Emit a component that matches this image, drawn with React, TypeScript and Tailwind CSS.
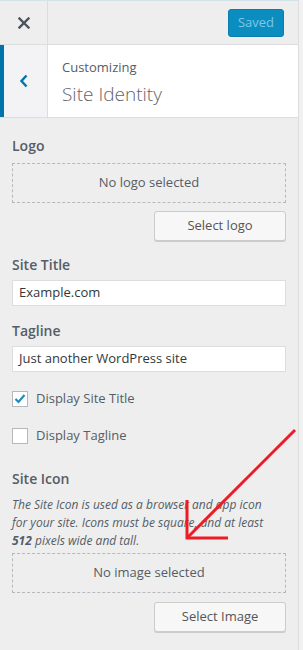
import React from "react";

export default function App() {
  const font = { fontFamily: '"Open Sans", "Noto Sans", Arial, sans-serif' };
  return (
    <div className="relative w-[303px] h-[650px] bg-[#f1f1f1] overflow-hidden" style={font}>
      <div className="w-[299px] h-[650px] bg-[#eeeeee] border-r border-[#dddddd] flex flex-col">
        {/* top bar */}
        <div className="h-[45px] flex border-b border-[#dddddd] border-t border-t-[#d4e2ea]">
          <div className="w-[48px] border-r border-[#dddddd] flex items-center justify-center">
            <svg width="12" height="12" viewBox="0 0 12 12">
              <path d="M1.5 1.5 L10.5 10.5 M10.5 1.5 L1.5 10.5" stroke="#4c545b" strokeWidth="2.4" strokeLinecap="square" />
            </svg>
          </div>
          <div className="flex-1 flex items-center justify-end pr-[14px]">
            <div className="h-[28px] w-[56px] rounded-[3px] bg-[#0c8dc0] border border-[#0a7db0] text-[#7cc9e6] text-[13px] flex items-center justify-center">
              Saved
            </div>
          </div>
        </div>
        {/* header */}
        <div className="h-[73px] flex border-b border-[#dddddd]">
          <div className="w-[48px] flex border-r border-[#dddddd] bg-[#f3f3f5]">
            <div className="w-[4px] bg-[#0073aa]" />
            <div className="flex-1 flex items-center justify-center pr-[4px]">
              <svg width="12" height="16" viewBox="0 0 12 16">
                <path d="M8.5 2.5 L3.5 8 L8.5 13.5" stroke="#0073aa" strokeWidth="2.4" fill="none" />
              </svg>
            </div>
          </div>
          <div className="flex-1 bg-white pl-[14px] pt-[13px]">
            <div className="text-[13px] leading-[18px] text-[#555d66]">Customizing</div>
            <div className="text-[19px] leading-[28px] font-light text-[#5f666d] mt-[4px]">Site Identity</div>
          </div>
        </div>
        {/* content */}
        <div className="px-[12px] pt-[18px] text-[#555d66]">
          <div className="text-[14px] leading-[20px] font-semibold">Logo</div>
          <div className="mt-[7px] h-[40px] border border-dashed border-[#b4b9be] flex items-center justify-center text-[13px]">
            No logo selected
          </div>
          <div className="mt-[8px] flex justify-end">
            <div className="w-[132px] h-[30px] rounded-[3px] bg-[#f7f7f7] border border-[#cccccc] shadow-[0_1px_0_#cccccc] flex items-center justify-center text-[13px] text-[#555555]">
              Select logo
            </div>
          </div>
          <div className="mt-[14px] text-[14px] leading-[20px] font-semibold">Site Title</div>
          <div className="mt-[5px] h-[26px] bg-white border border-[#dddddd] flex items-center px-[6px] text-[13px] text-[#32373c]">
            Example.com
          </div>
          <div className="mt-[15px] text-[14px] leading-[20px] font-semibold">Tagline</div>
          <div className="mt-[5px] h-[26px] bg-white border border-[#dddddd] flex items-center px-[6px] text-[13px] text-[#32373c]">
            Just another WordPress site
          </div>
          <div className="mt-[18px] flex items-center gap-[8px] h-[18px]">
            <div className="w-[16px] h-[16px] bg-white border border-[#b4b9be] flex items-center justify-center">
              <svg width="14" height="14" viewBox="0 0 14 14">
                <path d="M2.5 7 L5.5 10 L11.5 3" stroke="#1e8cbe" strokeWidth="2.2" fill="none" />
              </svg>
            </div>
            <span className="text-[13px]">Display Site Title</span>
          </div>
          <div className="mt-[19px] flex items-center gap-[8px] h-[18px]">
            <div className="w-[16px] h-[16px] bg-white border border-[#b4b9be]" />
            <span className="text-[13px]">Display Tagline</span>
          </div>
          <div className="mt-[24px] text-[14px] leading-[20px] font-semibold">Site Icon</div>
          <div className="mt-[7px] text-[12px] leading-[18px] italic">
            The Site Icon is used as a browser and app icon<br />
            for your site. Icons must be square, and at least<br />
            <strong className="font-bold">512</strong> pixels wide and tall.
          </div>
          <div className="mt-[3px] h-[40px] border border-dashed border-[#b4b9be] flex items-center justify-center text-[13px]">
            No image selected
          </div>
          <div className="mt-[9px] flex justify-end">
            <div className="w-[132px] h-[30px] rounded-[3px] bg-[#f7f7f7] border border-[#cccccc] shadow-[0_1px_0_#cccccc] flex items-center justify-center text-[13px] text-[#555555]">
              Select Image
            </div>
          </div>
        </div>
      </div>
      {/* annotation arrow */}
      <svg className="absolute left-0 top-0" width="303" height="650" viewBox="0 0 303 650">
        <path d="M295 430 L188 537" stroke="#ed1c24" strokeWidth="3" fill="none" />
        <path d="M187 500 L187 538 L228 538" stroke="#ed1c24" strokeWidth="3" fill="none" />
      </svg>
    </div>
  );
}
